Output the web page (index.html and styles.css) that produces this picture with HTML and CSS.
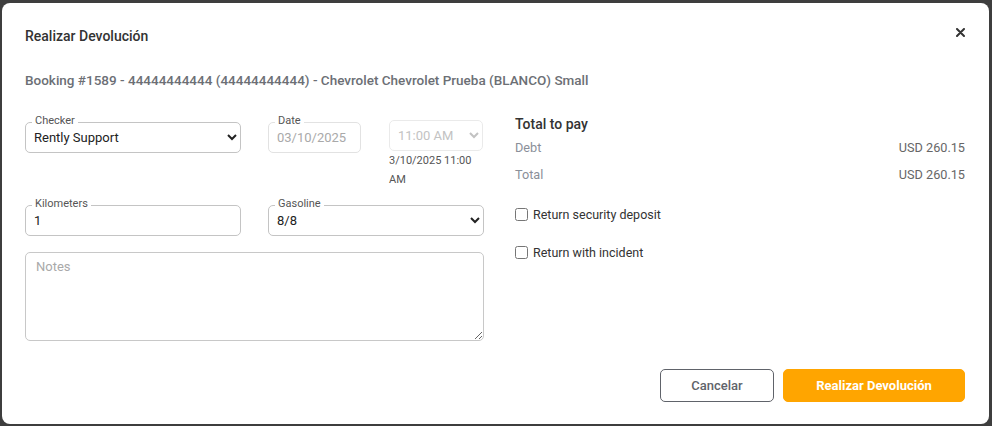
FILE: index.html
```html
<!DOCTYPE html>
<html lang="es">
<head>
<meta charset="utf-8">
<title>Realizar Devolución</title>
<link rel="stylesheet" href="styles.css">
</head>
<body>
<div class="backdrop">
  <div class="modal">
    <div class="modal-header">
      <h2 class="title">Realizar Devolución</h2>
      <button class="close" aria-label="Cerrar">
        <svg width="9" height="9" viewBox="0 0 9 9"><path d="M1 1 L8 8 M8 1 L1 8" stroke="#333" stroke-width="2" stroke-linecap="round"/></svg>
      </button>
    </div>
    <p class="booking">Booking #1589 - 44444444444 (44444444444) - Chevrolet Chevrolet Prueba (BLANCO) Small</p>

    <div class="modal-body">
      <div class="left">
        <div class="row row-top">
          <div class="field">
            <label class="float-label">Checker</label>
            <select class="control">
              <option>Rently Support</option>
            </select>
          </div>
          <div class="date-time">
            <div class="field date-field">
              <label class="float-label">Date</label>
              <input class="control control-disabled" type="text" value="03/10/2025" readonly>
            </div>
            <div class="time-col">
              <select class="control time-select" disabled>
                <option>11:00 AM</option>
              </select>
              <div class="time-note">3/10/2025 11:00 AM</div>
            </div>
          </div>
        </div>
        <div class="row row-second">
          <div class="field">
            <label class="float-label">Kilometers</label>
            <input class="control" type="text" value="1">
          </div>
          <div class="field">
            <label class="float-label">Gasoline</label>
            <select class="control">
              <option>8/8</option>
            </select>
          </div>
        </div>
        <textarea class="notes" placeholder="Notes"></textarea>
      </div>

      <div class="right">
        <h3 class="pay-title">Total to pay</h3>
        <div class="pay-row"><span class="pay-label">Debt</span><span class="pay-value">USD 260.15</span></div>
        <div class="pay-row"><span class="pay-label">Total</span><span class="pay-value">USD 260.15</span></div>
        <div class="checks">
          <label class="check"><input type="checkbox"><span>Return security deposit</span></label>
          <label class="check"><input type="checkbox"><span>Return with incident</span></label>
        </div>
      </div>
    </div>

    <div class="modal-footer">
      <button class="btn btn-outline">Cancelar</button>
      <button class="btn btn-primary">Realizar Devolución</button>
    </div>
  </div>
</div>
</body>
</html>
```

FILE: styles.css
```css
* { box-sizing: border-box; }

html, body {
  margin: 0;
  height: 100%;
}

body {
  background: #3e3e3e;
  font-family: Roboto, "Liberation Sans", Arial, sans-serif;
  color: #333;
}

.backdrop {
  padding: 3px 3px 0 2px;
}

.modal {
  width: 987px;
  height: 421px;
  background: #fff;
  border-radius: 8px;
  padding: 23px 24px 22px 23px;
  display: flex;
  flex-direction: column;
}

.modal-header {
  display: flex;
  justify-content: space-between;
  align-items: center;
  height: 20px;
}

.title {
  margin: 0;
  font-size: 14px;
  line-height: 20px;
  font-weight: 500;
  color: #333;
}

.close {
  border: 0;
  background: none;
  padding: 0;
  margin: -8px 0 0 0;
  width: 9px;
  height: 9px;
  display: flex;
  cursor: pointer;
}

.booking {
  margin: 24px 0 0 0;
  font-size: 13.5px;
  line-height: 20px;
  font-weight: 500;
  color: #6c6f75;
}

.modal-body {
  margin-top: 24px;
  display: flex;
  gap: 31px;
}

.left {
  width: 459px;
  padding-top: 6px;
  display: flex;
  flex-direction: column;
}

.row {
  display: flex;
  gap: 27px;
  align-items: flex-start;
}

.row > * {
  flex: 0 0 216px;
}

.row-top .field {
  margin-top: 2px;
}

.row-second {
  margin-top: 16px;
}

.field {
  position: relative;
}

.float-label {
  position: absolute;
  top: -7px;
  left: 7px;
  padding: 0 3px;
  background: #fff;
  font-size: 11px;
  line-height: 12px;
  color: #555;
}

.control {
  width: 100%;
  height: 31px;
  border: 1px solid #c4c4c4;
  border-radius: 5px;
  background: #fff;
  font-family: Roboto, "Liberation Sans", Arial, sans-serif;
  font-size: 13px;
  color: #222;
  padding: 0 6px 0 4px;
  outline: none;
}

input.control {
  padding-left: 8px;
}

.control-disabled {
  color: #a9a9a9;
  border-color: #e2e2e2;
}

.date-time {
  display: flex;
  gap: 28px;
}

.date-field {
  flex: 0 0 93px;
}

.time-col {
  flex: 0 0 94px;
}

.time-select {
  border-color: #e2e2e2;
  color: #a9a9a9;
  background: #fff;
  padding-left: 4px;
}

.time-note {
  font-size: 11px;
  line-height: 19px;
  color: #555;
}

.notes {
  margin-top: 16px;
  width: 459px;
  height: 89px;
  border: 1px solid #c8c8c8;
  border-radius: 5px;
  padding: 5px 10px;
  font-family: Roboto, "Liberation Sans", Arial, sans-serif;
  font-size: 13px;
  line-height: 18px;
  color: #333;
  outline: none;
}

.notes::placeholder {
  color: #a9a9a9;
}

.right {
  width: 450px;
  display: flex;
  flex-direction: column;
}

.pay-title {
  margin: 0;
  font-size: 14px;
  line-height: 20px;
  font-weight: 500;
  color: #333;
}

.pay-row {
  display: flex;
  justify-content: space-between;
  font-size: 12.7px;
  line-height: 27px;
}

.pay-label {
  color: #8a8f99;
}

.pay-value {
  color: #666;
}

.checks {
  margin-top: 7px;
  display: flex;
  flex-direction: column;
}

.check {
  height: 38px;
  display: flex;
  align-items: center;
  gap: 5px;
  font-size: 12.5px;
  color: #333;
}

.check input {
  margin: 0;
  width: 13px;
  height: 13px;
}

.modal-footer {
  margin-top: auto;
  display: flex;
  justify-content: flex-end;
  gap: 9px;
}

.btn {
  height: 33px;
  border-radius: 5px;
  font-family: Roboto, "Liberation Sans", Arial, sans-serif;
  font-size: 13px;
  font-weight: 500;
  cursor: pointer;
}

.btn-outline {
  width: 114px;
  background: #fff;
  border: 1px solid #60636a;
  color: #60636a;
}

.btn-primary {
  width: 182px;
  background: #ffa500;
  border: 1px solid #ffa500;
  color: #fff;
  font-weight: 700;
}
```
